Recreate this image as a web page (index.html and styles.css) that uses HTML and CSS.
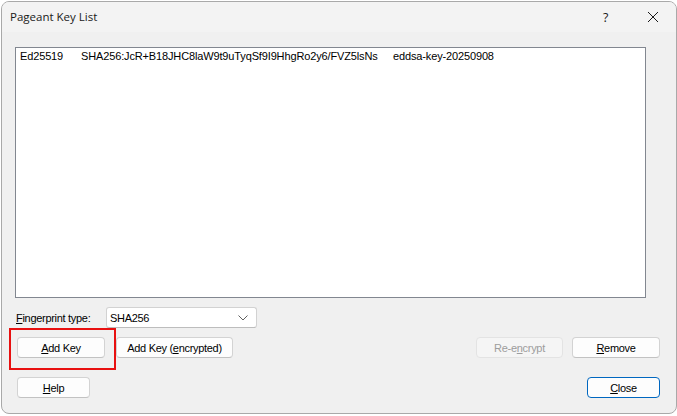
FILE: index.html
```html
<!DOCTYPE html>
<html>
<head>
<meta charset="utf-8">
<link rel="stylesheet" href="styles.css">
</head>
<body>
<div class="desk">
  <div class="window">
    <div class="titlebar">
      <span class="title">Pageant Key List</span>
      <span class="qmark">?</span>
      <span class="xbtn"><svg width="12" height="12" viewBox="0 0 12 12"><path d="M1 1L11 11M11 1L1 11" stroke="#1a1a1a" stroke-width="1" fill="none"/></svg></span>
    </div>
    <div class="client">
      <div class="listbox">
        <div class="row"><span class="c1">Ed25519</span><span class="c2">SHA256:JcR+B18JHC8laW9t9uTyqSf9I9HhgRo2y6/FVZ5lsNs</span><span class="c3">eddsa-key-20250908</span></div>
      </div>
      <div class="fp-row">
        <span class="fp-label"><u>F</u>ingerprint type:</span>
        <div class="combo"><span>SHA256</span><svg width="10" height="6" viewBox="0 0 10 6"><path d="M0.5 0.5L5 5L9.5 0.5" stroke="#606060" stroke-width="1" fill="none"/></svg></div>
      </div>
      <div class="btn-row">
        <div class="btn w-add"><u>A</u>dd Key</div>
        <div class="btn w-enc">Add Key (<u>e</u>ncrypted)</div>
        <div class="spacer"></div>
        <div class="btn disabled w-reenc">Re-e<u>n</u>crypt</div>
        <div class="btn w-remove"><u>R</u>emove</div>
      </div>
      <div class="bottom-row">
        <div class="btn w-help"><u>H</u>elp</div>
        <div class="spacer"></div>
        <div class="btn default w-close"><u>C</u>lose</div>
      </div>
      <div class="highlight"></div>
    </div>
  </div>
</div>
</body>
</html>
```
FILE: styles.css
```css
html, body {
  margin: 0;
  padding: 0;
  background: #ffffff;
}
.desk {
  width: 677px;
  height: 416px;
  padding: 1px 0 0 1px;
  box-sizing: border-box;
  overflow: hidden;
}
.window {
  width: 676px;
  height: 413px;
  box-sizing: border-box;
  border: 1px solid #a9a9a9;
  border-radius: 8px;
  background: #f0f0f0;
  overflow: hidden;
  display: flex;
  flex-direction: column;
  font-family: "Liberation Sans", Arial, sans-serif;
  font-size: 11px;
  letter-spacing: -0.3px;
  color: #000;
}
.titlebar {
  height: 30px;
  background: #f3f3f3;
  display: flex;
  align-items: center;
  padding-left: 8px;
  flex-shrink: 0;
  letter-spacing: 0;
}
.title {
  font-family: "Open Sans", "Noto Sans", sans-serif;
  font-size: 11.5px;
  color: #1a1a1a;
  flex: 1;
  padding-bottom: 1px;
}
.qmark {
  font-family: "Open Sans", "Noto Sans", sans-serif;
  font-size: 12.5px;
  color: #1a1a1a;
  width: 10px;
  margin-right: 34px;
}
.xbtn {
  display: flex;
  width: 12px;
  height: 12px;
  margin-right: 17px;
}
.client {
  position: relative;
  flex: 1;
  padding-top: 15px;
}
.listbox {
  margin-left: 13px;
  width: 631px;
  height: 251px;
  box-sizing: border-box;
  border: 1px solid #828790;
  background: #fff;
  padding: 2px 0 0 4px;
}
.row {
  display: flex;
  height: 13px;
  line-height: 13px;
  white-space: nowrap;
  letter-spacing: -0.14px;
}
.c1 { width: 61px; flex-shrink: 0; }
.c2 { width: 312px; flex-shrink: 0; }
.fp-row {
  display: flex;
  align-items: center;
  margin-top: 9px;
  height: 21px;
}
.fp-label {
  width: 90px;
  padding-left: 14px;
  padding-top: 1px;
}
.combo {
  width: 151px;
  height: 21px;
  box-sizing: border-box;
  border: 1px solid #d2d2d2;
  border-bottom-color: #bdbdbd;
  border-radius: 3px;
  background: #fff;
  display: flex;
  align-items: center;
  justify-content: space-between;
  padding: 0 8px 0 3px;
}
.btn-row {
  display: flex;
  margin-top: 9px;
  padding-left: 15px;
}
.bottom-row {
  display: flex;
  margin-top: 19px;
  padding-left: 15px;
}
.spacer { flex: 1; }
.btn {
  height: 21px;
  box-sizing: border-box;
  border: 1px solid #d3d3d3;
  border-bottom-color: #c2c2c2;
  border-radius: 4px;
  background: #fdfdfd;
  display: flex;
  align-items: center;
  justify-content: center;
  white-space: nowrap;
}
.btn.disabled {
  color: #9d9d9d;
  background: #f5f5f5;
  border-color: #e3e3e3;
}
.btn.default {
  border: 1px solid #0067c0;
}
.w-add { width: 88px; }
.w-enc { width: 117px; margin-left: 11px; }
.w-reenc { width: 87px; }
.w-remove { width: 88px; margin-left: 9px; margin-right: 16px; }
.w-help { width: 73px; }
.w-close { width: 73px; margin-right: 16px; }
.highlight {
  position: absolute;
  left: 7px;
  top: 296px;
  width: 107px;
  height: 42px;
  box-sizing: border-box;
  border: 2px solid #e81010;
}
```
